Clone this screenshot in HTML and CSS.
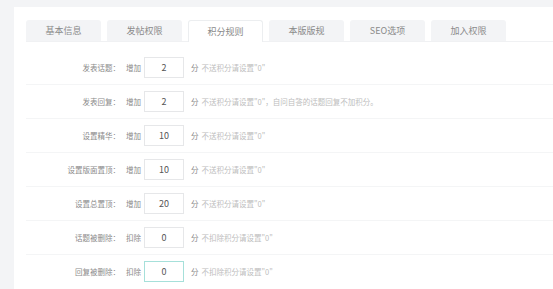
FILE: index.html
```html
<!DOCTYPE html>
<html lang="zh">
<head>
<meta charset="utf-8">
<link rel="stylesheet" href="styles.css">
</head>
<body>
<div class="page">
  <div class="card">
    <div class="tabs">
      <div class="tab">基本信息</div>
      <div class="tab">发帖权限</div>
      <div class="tab active">积分规则</div>
      <div class="tab">本版版规</div>
      <div class="tab">SEO选项</div>
      <div class="tab">加入权限</div>
    </div>
    <div class="form">
      <div class="row"><span class="label">发表话题：</span><span class="op">增加</span><span class="input">2</span><span class="unit">分</span><span class="hint">不送积分请设置"0"</span></div>
      <div class="row"><span class="label">发表回复：</span><span class="op">增加</span><span class="input">2</span><span class="unit">分</span><span class="hint">不送积分请设置"0"，自问自答的话题回复不加积分。</span></div>
      <div class="row"><span class="label">设置精华：</span><span class="op">增加</span><span class="input">10</span><span class="unit">分</span><span class="hint">不送积分请设置"0"</span></div>
      <div class="row"><span class="label">设置版面置顶：</span><span class="op">增加</span><span class="input">10</span><span class="unit">分</span><span class="hint">不送积分请设置"0"</span></div>
      <div class="row"><span class="label">设置总置顶：</span><span class="op">增加</span><span class="input">20</span><span class="unit">分</span><span class="hint">不送积分请设置"0"</span></div>
      <div class="row"><span class="label">话题被删除：</span><span class="op">扣除</span><span class="input">0</span><span class="unit">分</span><span class="hint">不扣除积分请设置"0"</span></div>
      <div class="row last"><span class="label">回复被删除：</span><span class="op">扣除</span><span class="input focus">0</span><span class="unit">分</span><span class="hint">不扣除积分请设置"0"</span></div>
    </div>
  </div>
</div>
</body>
</html>
```
FILE: styles.css
```css
html, body {
  margin: 0;
  padding: 0;
  background: #f3f4f6;
  font-family: "Noto Sans CJK SC", "Noto Sans", "Liberation Sans", sans-serif;
  overflow: hidden;
}
.page {
  padding: 7px 0 0 14px;
  height: 282px;
}
.card {
  background: #ffffff;
  height: 100%;
  padding: 13px 0 0 12px;
  box-sizing: border-box;
}
.tabs {
  display: flex;
  gap: 6px;
  border-bottom: 1px solid #f0f1f3;
  height: 21px;
}
.tab {
  width: 75px;
  height: 21px;
  box-sizing: border-box;
  background: #f3f4f6;
  border-radius: 3px 3px 0 0;
  color: #8a8a8a;
  font-size: 9px;
  display: flex;
  align-items: center;
  justify-content: center;
}
.tab.active {
  background: #fff;
  border: 1px solid #eceef0;
  border-bottom: none;
  height: 22px;
}
.form {
  padding-top: 9px;
}
.row {
  display: flex;
  align-items: center;
  height: 33px;
  border-bottom: 1px solid #f4f5f6;
  font-size: 7.5px;
}
.row.last {
  border-bottom: none;
}
.label {
  width: 94px;
  text-align: right;
  color: #8a8a8a;
}
.op {
  margin-left: 6px;
  color: #8a8a8a;
}
.input {
  margin-left: 3px;
  width: 40px;
  height: 21px;
  box-sizing: border-box;
  border: 1px solid #e6e7e9;
  display: flex;
  align-items: center;
  justify-content: center;
  font-size: 9px;
  color: #555;
}
.input.focus {
  border-color: #a6e0da;
}
.unit {
  margin-left: 7px;
  color: #8a8a8a;
}
.hint {
  margin-left: 3px;
  color: #bdbdbd;
}
```
